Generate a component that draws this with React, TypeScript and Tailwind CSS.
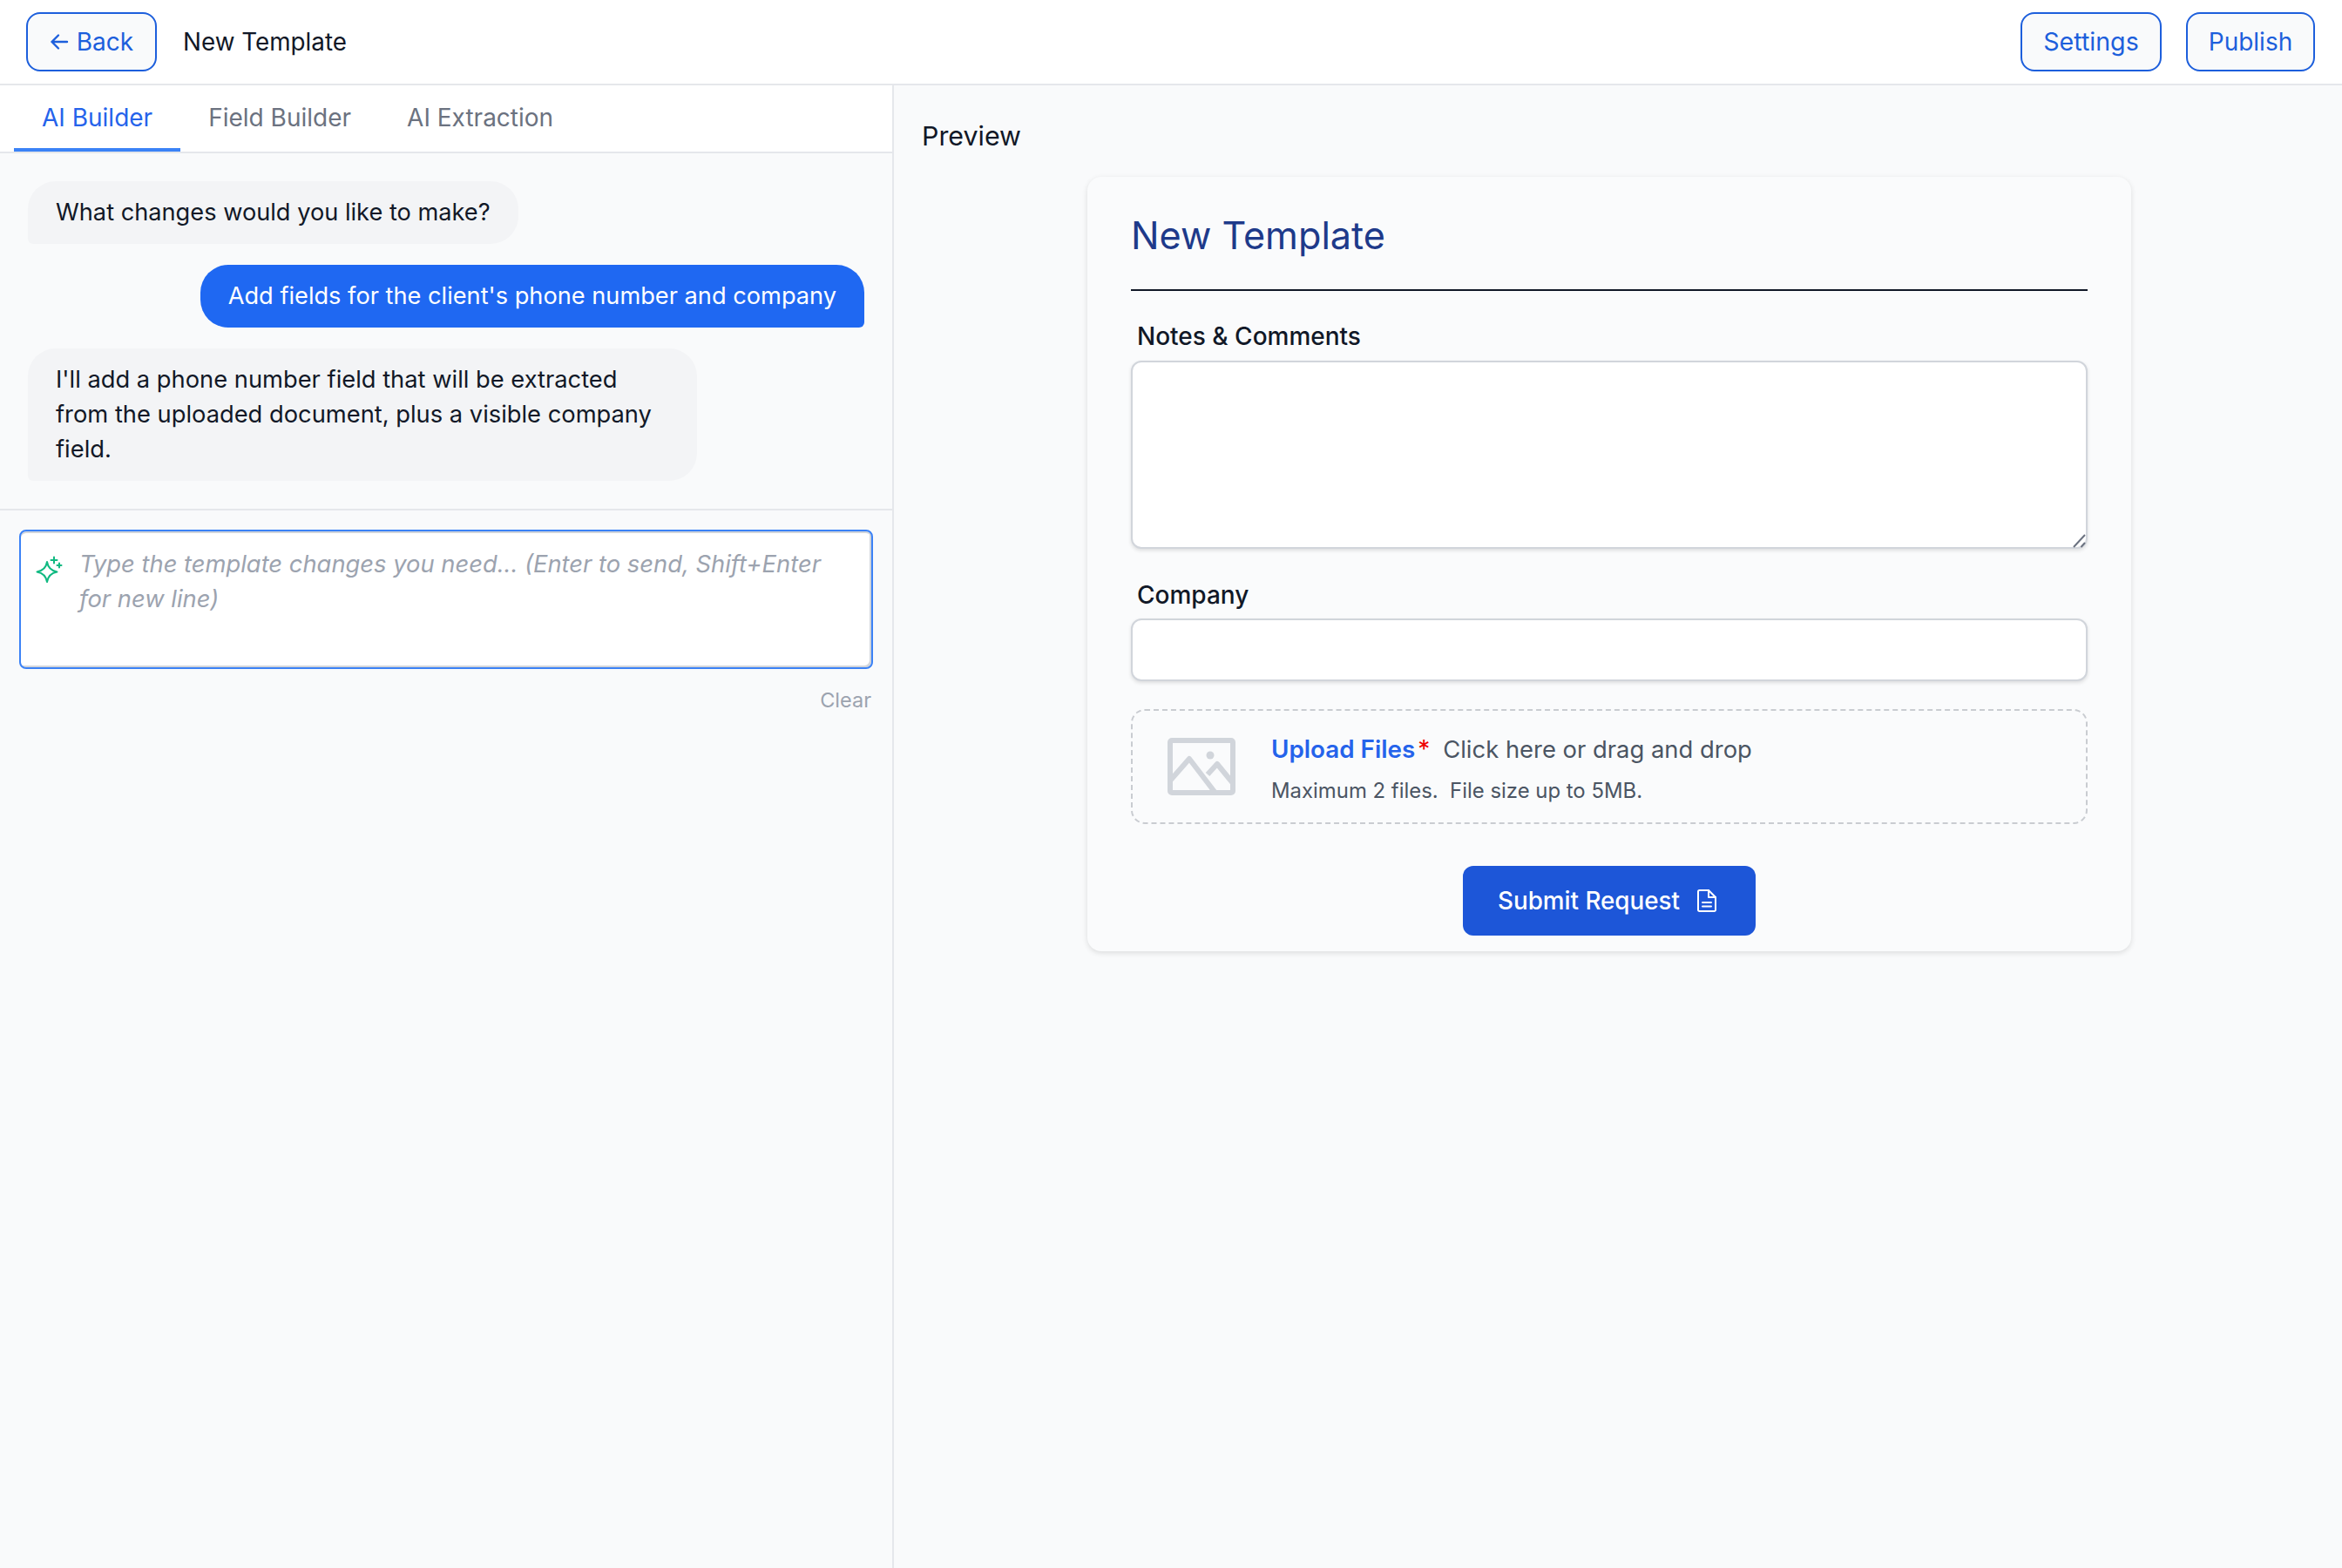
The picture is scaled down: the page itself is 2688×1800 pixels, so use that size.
import React from "react";

function Arrow() {
  return (
    <svg width="22" height="22" viewBox="0 0 22 22" fill="none" stroke="currentColor" strokeWidth="2.4" strokeLinecap="round" strokeLinejoin="round">
      <path d="M20 11H2.500M10 3.500 2.500 11l7.500 7.500" />
    </svg>
  );
}

function Sparkle() {
  return (
    <svg width="32" height="34" viewBox="0 0 32 34" fill="none" stroke="#10b981" strokeWidth="2" strokeLinecap="round" strokeLinejoin="round">
      <path d="M14 9Q15.500 18.500 25.500 20.500Q15.500 22.500 14 32Q12.500 22.500 2.500 20.500Q12.500 18.500 14 9Z" />
      <path d="M22 3.500v7M18.500 7h7" />
      <path d="M28 10.500v5M25.500 13h5" />
    </svg>
  );
}

function ImageIcon() {
  return (
    <svg width="78" height="66" viewBox="0 0 78 66" fill="none" stroke="#d1d5db" strokeWidth="6" strokeLinejoin="round">
      <rect x="3" y="3" width="72" height="60" rx="2" />
      <path d="M4 48 25 24l29 38" />
      <path d="M46 42l11-12 18 22" />
      <circle cx="49" cy="20" r="4.500" fill="#d1d5db" stroke="none" />
    </svg>
  );
}

function DocIcon() {
  return (
    <svg width="22" height="26" viewBox="0 0 22 26" fill="none" stroke="white" strokeWidth="2" strokeLinejoin="round" strokeLinecap="round">
      <path d="M2.500 1h10.500l8 8v14.500a1.500 1.500 0 0 1-1.500 1.500h-17A1.500 1.500 0 0 1 1 23.500v-21A1.500 1.500 0 0 1 2.500 1Z" />
      <path d="M13 1v8h8" />
      <path d="M6 15h10M6 19.500h10" />
    </svg>
  );
}

function Grip() {
  return (
    <svg className="pointer-events-none absolute bottom-[1px] right-[2px]" width="15" height="16" viewBox="0 0 15 16" fill="none" stroke="#6b7280" strokeWidth="2">
      <path d="M1 15 14 1M9.500 15 14 10" />
    </svg>
  );
}

function OutlineButton({ children, className }: { children: React.ReactNode; className: string }) {
  return (
    <button className={"flex h-[68px] items-center justify-center rounded-[16px] border-2 border-[#1d5fdc] bg-[#f9fafb] text-[#1d5fdc] " + className}>
      {children}
    </button>
  );
}

export default function App() {
  return (
    <div className="flex h-[1800px] w-[2688px] flex-col overflow-hidden bg-[#f9fafb] font-['Inter',sans-serif] text-[28px] leading-[40px] text-[#111827]">
      <header className="flex h-[98px] shrink-0 items-center border-b-2 border-[#e5e7eb] bg-white pl-[30px] pr-[31px]">
        <OutlineButton className="w-[150px] gap-[9px] text-[28px]">
          <Arrow />
          Back
        </OutlineButton>
        <span className="ml-[30px] text-[27.8px]">New Template</span>
        <div className="ml-auto flex gap-[28px]">
          <OutlineButton className="w-[162px] text-[28.6px]">Settings</OutlineButton>
          <OutlineButton className="w-[148px] text-[28px]">Publish</OutlineButton>
        </div>
      </header>

      <div className="flex min-h-0 flex-1">
        <aside className="flex w-[1026px] shrink-0 flex-col border-r-2 border-[#e5e7eb]">
          <nav className="flex h-[78px] shrink-0 items-start border-b-2 border-[#e5e7eb] bg-white pl-[16px]">
            <div className="h-[76px] border-b-4 border-[#3b82f6] px-[32px] pt-[17px] text-[#2563eb]">AI Builder</div>
            <div className="px-[32px] pt-[17px] text-[#6b7280]">Field Builder</div>
            <div className="px-[32px] pt-[17px] text-[#6b7280]">AI Extraction</div>
          </nav>

          <section className="flex flex-col gap-[24px] border-b-2 border-[#e5e7eb] p-[32px] text-[27.2px]">
            <div className="w-fit rounded-[32px] rounded-bl-[6px] bg-[#f3f4f6] px-[32px] py-[16px]">What changes would you like to make?</div>
            <div className="w-fit self-end rounded-[32px] rounded-br-[6px] bg-[#1f68f2] px-[32px] py-[16px] text-white">Add fields for the client's phone number and company</div>
            <div className="w-[768px] rounded-[32px] rounded-bl-[6px] bg-[#f3f4f6] px-[32px] py-[16px] text-[27.3px]">
              I'll add a phone number field that will be extracted from the uploaded document, plus a visible company field.
            </div>
          </section>

          <section className="px-[22px] pt-[22px]">
            <div className="relative h-[160px] rounded-[8px] border-2 border-[#3b82f6] bg-white shadow-[inset_0_2px_0_#d1d5db,inset_-2px_-2px_0_#d1d5db]">
              <div className="absolute left-[16px] top-[26px]">
                <Sparkle />
              </div>
              <textarea
                className="block h-full w-full resize-none bg-transparent pb-[16px] pl-[67px] pr-[32px] pt-[18px] text-[27.35px] leading-[40px] italic outline-none placeholder:text-[#9ca3af]"
                placeholder="Type the template changes you need... (Enter to send, Shift+Enter for new line)"
              />
            </div>
            <div className="mt-[18px] pr-[2px] text-right text-[23.5px] leading-[36px] text-[#9ca3af]">Clear</div>
          </section>
        </aside>

        <main className="flex min-w-0 flex-1 flex-col pl-[32px] pr-[52px]">
          <h2 className="mt-[38px] text-[30.4px] leading-[40px] text-[#111827]">Preview</h2>
          <div className="mx-auto mt-[27px] w-[1198px] rounded-[16px] bg-[#fafbfc] px-[50px] pb-[18px] pt-[42px] shadow-[0_2px_6px_rgba(0,0,0,0.12)]">
            <h1 className="border-b-2 border-[#111827] pb-[37px] text-[43.2px] leading-[50px] text-[#1e3a8a]">New Template</h1>

            <label className="mt-[32px] block pl-[7px] font-medium">Notes &amp; Comments</label>
            <div className="relative mt-[8px] h-[216px]">
              <textarea className="block h-full w-full resize-none rounded-[12px] border-2 border-[#d1d5db] bg-white shadow-[0_2px_4px_rgba(0,0,0,0.12)] outline-none" />
              <Grip />
            </div>

            <label className="mt-[33px] block pl-[7px] font-medium">Company</label>
            <input className="mt-[7px] block h-[72px] w-full rounded-[12px] border-2 border-[#d1d5db] bg-white shadow-[0_2px_4px_rgba(0,0,0,0.12)] outline-none" />

            <div className="mt-[32px] flex h-[132px] items-center rounded-[16px] border-2 border-dashed border-[#c9ccd1] pl-[40px]">
              <ImageIcon />
              <div className="ml-[41px] flex flex-col pt-[8px]">
                <div className="flex items-baseline">
                  <span className="text-[27.8px] font-semibold text-[#2563eb]">Upload Files</span>
                  <span className="ml-[3px] text-[#ef0000]">*</span>
                  <span className="ml-[15px] text-[27.4px] text-[#4b5563]">Click here or drag and drop</span>
                </div>
                <div className="mt-[8px] whitespace-pre text-[23.9px] leading-[40px] text-[#4b5563]">Maximum 2 files.  File size up to 5MB.</div>
              </div>
            </div>

            <div className="mt-[48px] flex justify-center">
              <button className="flex h-[80px] w-[336px] items-center justify-center gap-[20px] rounded-[12px] bg-[#1d56d8] pr-[5px] text-[27.8px] font-medium text-white">
                Submit Request
                <DocIcon />
              </button>
            </div>
          </div>
        </main>
      </div>
    </div>
  );
}
